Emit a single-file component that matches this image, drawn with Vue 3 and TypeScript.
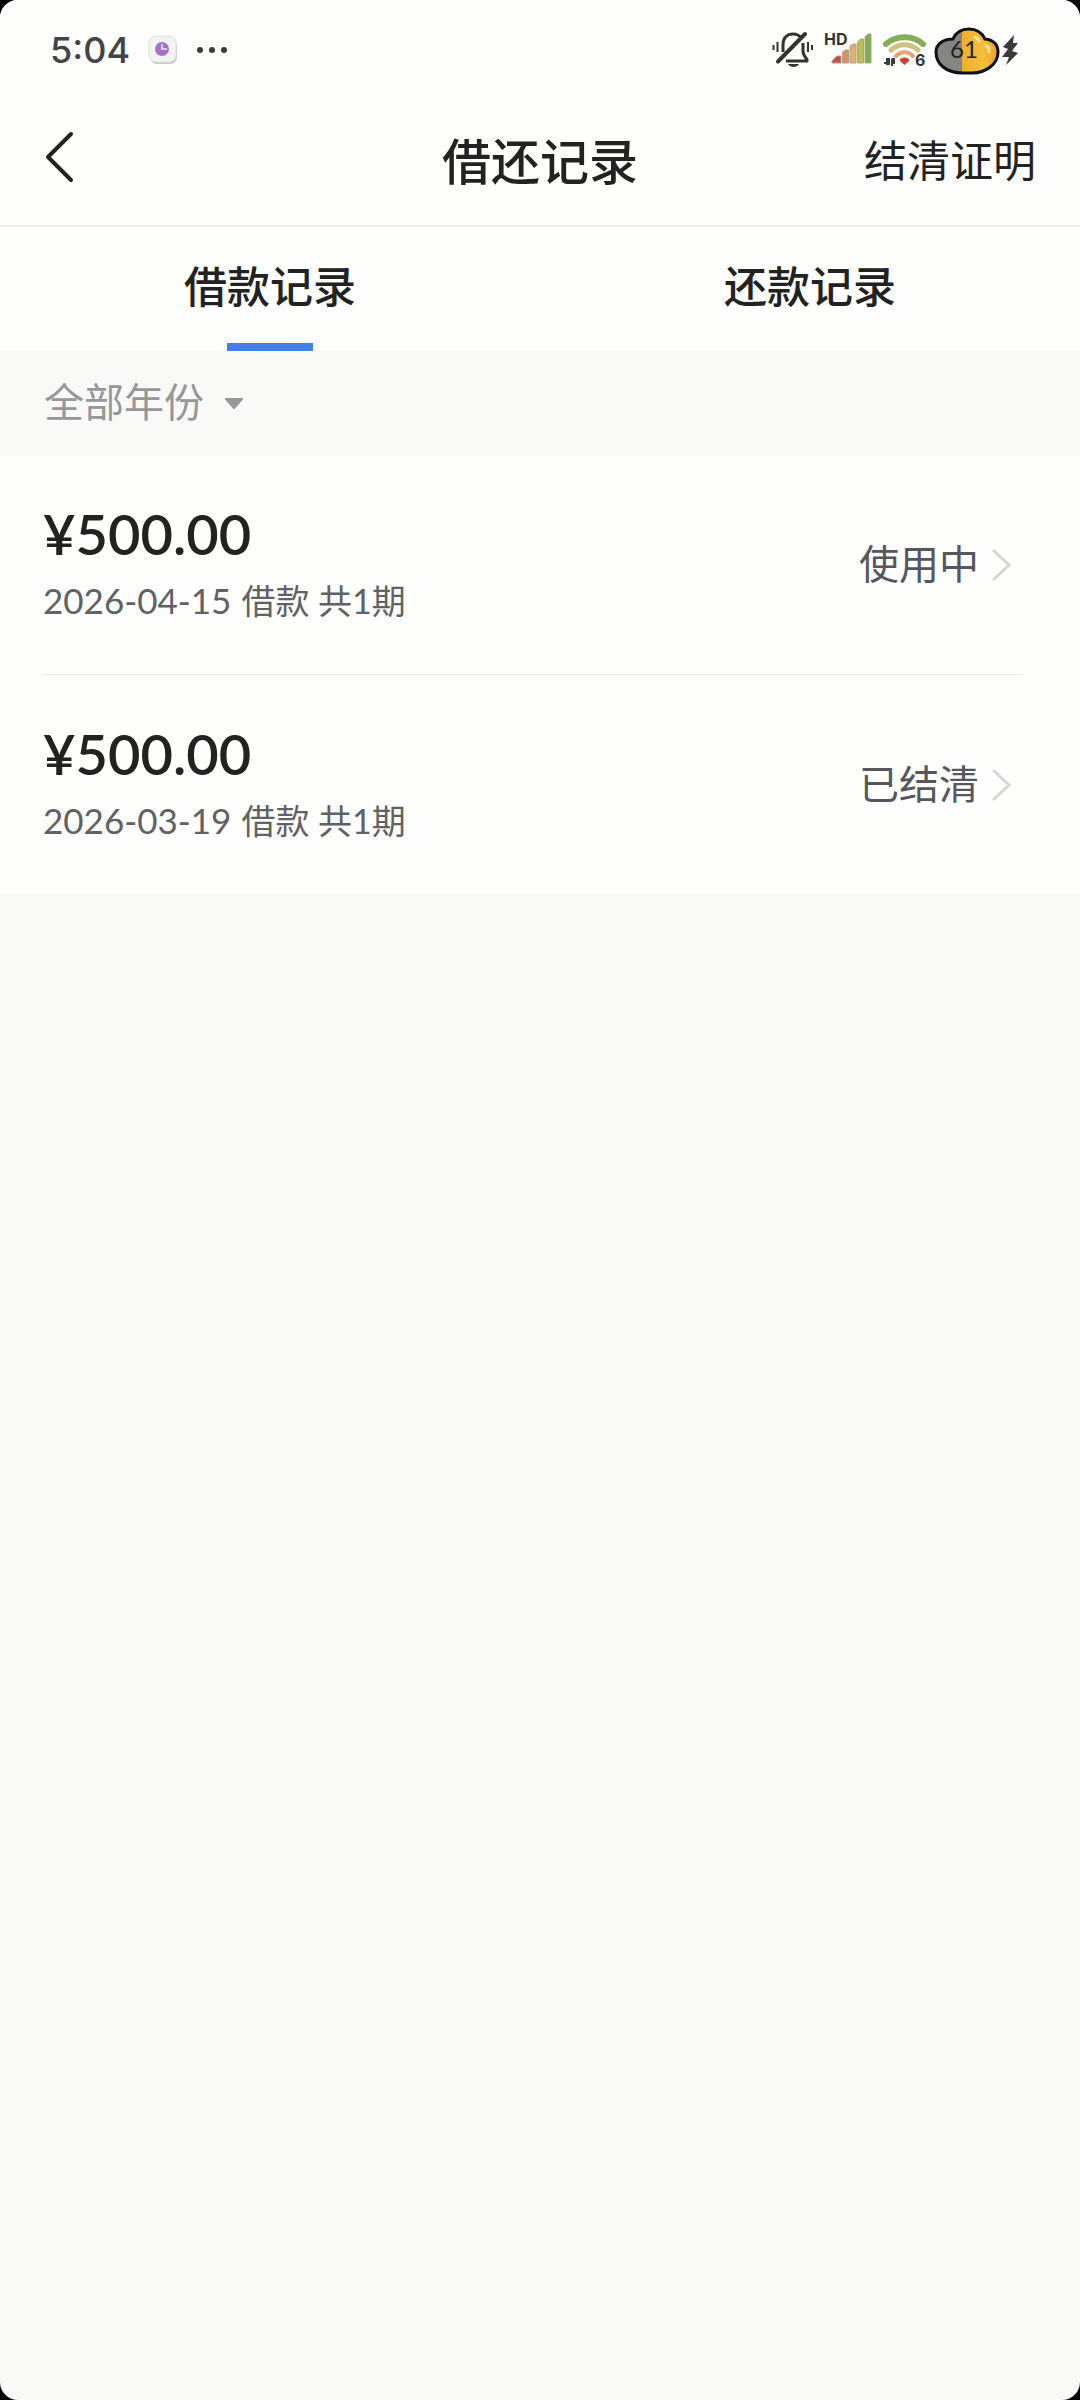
<script setup lang="ts">
import { ref } from 'vue'

interface LoanRecord {
  id: number
  amount: string
  date: string
  summary: string
  status: string
}

const tabs: string[] = ['借款记录', '还款记录']
const activeTab = ref<number>(0)
const year = ref<string>('全部年份')

const records: LoanRecord[] = [
  { id: 1, amount: '¥500.00', date: '2026-04-15', summary: '借款 共1期', status: '使用中' },
  { id: 2, amount: '¥500.00', date: '2026-03-19', summary: '借款 共1期', status: '已结清' },
]
</script>

<template>
  <div class="screen">
    <div class="status-bar">
      <div class="status-left">
        <span class="time">5:04</span>
        <svg width="30" height="30" viewBox="0 0 30 30" aria-hidden="true">
          <rect x="2" y="3" width="27" height="26" rx="7" fill="#c9ccc9" />
          <rect x="1" y="1" width="27" height="26" rx="7" fill="#f3f3f4" stroke="#dfe3df" />
          <circle cx="14" cy="14" r="7" fill="#a673c4" />
          <path d="M14 9v5h5" fill="none" stroke="#c9d3f7" stroke-width="2" />
        </svg>
        <svg width="32" height="8" viewBox="0 0 32 8" fill="#3a3a3a" aria-hidden="true">
          <circle cx="4" cy="4" r="3" />
          <circle cx="16" cy="4" r="3" />
          <circle cx="28" cy="4" r="3" />
        </svg>
      </div>
      <div class="status-right">
        <svg width="42" height="50" viewBox="0 0 42 50" fill="none" stroke="#333" stroke-width="3" aria-hidden="true">
          <path d="M11 27v-7c0-7 4-11 10-11 3 0 6 1 8 4M31 18v8c0 4 2 6 4 8.500v1.500H14" stroke-linejoin="round" />
          <path d="M33 9L6 36.500" stroke-width="4" stroke-linecap="round" />
          <path d="M16 39h11c-2 4-9 4-11 0z" fill="#333" stroke="none" />
          <path d="M1.500 20v5M5.500 17v10M36 17v10M40 20v5" stroke-width="2" />
        </svg>
        <svg width="48" height="50" viewBox="0 0 48 50" aria-hidden="true">
          <text x="0" y="20" class="badge-text">HD</text>
          <g stroke="#a9a292" stroke-width="1">
            <path d="M8 38v-2l5-5h4v7z" fill="#c4503f" />
            <path d="M18.500 38V27l3-2h3v13z" fill="#e38a66" />
            <path d="M26 38V21l3-2h3v19z" fill="#e6b06c" />
            <path d="M33.500 38V17l3-3h3v24z" fill="#bcbc60" />
            <path d="M41 38V12l3-3h3v29z" fill="#7fae48" />
          </g>
        </svg>
        <svg width="44" height="50" viewBox="0 0 44 50" fill="none" aria-hidden="true">
          <path d="M4 19c10-9 27-9 37 0" stroke="#86ad57" stroke-width="6" stroke-linecap="round" />
          <path d="M9 25c8-7 19-7 27 0" stroke="#cfc383" stroke-width="5" stroke-linecap="round" />
          <path d="M14 31c5-5 12-5 17 0" stroke="#e9a176" stroke-width="4" stroke-linecap="round" />
          <path d="M18 34q4.500-3 9 0v2l-4.500 4l-4.500-4z" fill="#c8442f" />
          <path d="M5 33v7M2 38h3M7 33v7M10 41v-7M10 34h3M12 34v5" stroke="#3a3a3a" stroke-width="2" />
          <text x="33" y="41" class="badge-text">6</text>
        </svg>
        <svg class="battery" width="66" height="50" viewBox="0 0 66 50" aria-hidden="true">
          <defs>
            <linearGradient id="charge" x1="0" y1="0" x2="66" y2="0" gradientUnits="userSpaceOnUse">
              <stop offset="0.42" stop-color="#858585" />
              <stop offset="0.42" stop-color="#eeb02c" />
              <stop offset="0.75" stop-color="#f7bd3c" />
              <stop offset="1" stop-color="#e8a022" />
            </linearGradient>
          </defs>
          <path
            d="M19 14C22 7 28 4 35 4C43 4 48 8 51 14C59 15 64 19 64 27C64 39 52 48 38 48H29C12 48 2 39 2 27C2 19 9 14 19 14Z"
            fill="url(#charge)" stroke="#111" stroke-width="3" />
          <path d="M41 12q3 1 4 4M52 21q4 1 3 6" fill="none" stroke="#fbe08d" stroke-width="3" stroke-linecap="round" />
          <text x="30" y="33" text-anchor="middle" class="battery-text">61</text>
        </svg>
        <svg width="16" height="50" viewBox="0 0 16 50" aria-hidden="true">
          <path d="M12 10L1 22l5 2l-6 8h7l-3 8l12-12l-6-2l6-8h-5z" fill="#3a3a3a" />
        </svg>
      </div>
    </div>

    <header class="nav">
      <button type="button" class="back" aria-label="返回">
        <svg width="30" height="64" viewBox="0 0 30 64" fill="none" aria-hidden="true">
          <path d="M27 5L4 28L27 51" stroke="#222" stroke-width="4" stroke-linecap="round" stroke-linejoin="round" />
        </svg>
      </button>
      <h1 class="title">借还记录</h1>
      <a href="#certificate" class="certificate">结清证明</a>
    </header>

    <nav class="tabs" role="tablist">
      <button v-for="(tab, index) in tabs" :key="tab" type="button" role="tab" class="tab"
        :class="{ active: index === activeTab }" :aria-selected="index === activeTab" @click="activeTab = index">
        {{ tab }}
      </button>
    </nav>

    <div class="filter">
      <select v-model="year" class="year" aria-label="年份">
        <option>全部年份</option>
      </select>
      <svg width="20" height="14" viewBox="0 0 20 14" aria-hidden="true">
        <path d="M2 3H18L10 12Z" fill="#969799" stroke="#969799" stroke-width="2" stroke-linejoin="round" />
      </svg>
    </div>

    <ul class="records">
      <li v-for="record in records" :key="record.id">
        <a :href="`#record-${record.id}`" class="record">
          <span class="detail">
            <span class="amount">{{ record.amount }}</span>
            <span class="summary">
              <time class="date">{{ record.date }}</time>
              <span>{{ record.summary }}</span>
            </span>
          </span>
          <span class="state">{{ record.status }}</span>
          <svg width="20" height="36" viewBox="0 0 20 36" fill="none" aria-hidden="true">
            <path d="M2 3L18 18L2 33" stroke="#d6d6d6" stroke-width="3" />
          </svg>
        </a>
      </li>
    </ul>
  </div>
</template>

<style>
body {
  background: #000;
}
</style>

<style scoped>
.screen {
  min-height: 100vh;
  overflow: hidden;
  border-radius: 18px;
  background: #f9f9f8;
  color: #222;
  font-family: Lato, "Noto Sans CJK SC", sans-serif;
}

button,
select {
  margin: 0;
  padding: 0;
  border: 0;
  background: none;
  color: inherit;
  font-family: inherit;
}

a {
  color: inherit;
  text-decoration: none;
}

svg {
  display: block;
  flex: none;
}

.status-bar {
  display: flex;
  align-items: center;
  justify-content: space-between;
  height: 100px;
  padding: 0 62px 0 50px;
  background: #fefefd;
}

.status-left {
  display: flex;
  align-items: center;
  gap: 18px;
}

.time {
  color: #444;
  font-family: Inter, sans-serif;
  font-size: 36px;
  font-weight: 500;
}

.status-right {
  display: flex;
  align-items: center;
  gap: 10px;
}

.battery {
  margin: 0 -8px 0 -2px;
}

.badge-text {
  fill: #333;
  font-family: Inter, sans-serif;
  font-size: 16px;
  font-weight: 700;
}

.battery-text {
  fill: #222;
  font-size: 24px;
}

.nav {
  display: grid;
  grid-template-columns: 1fr auto 1fr;
  align-items: center;
  height: 127px;
  padding: 0 44px 4px;
  box-sizing: border-box;
  border-bottom: 2px solid #f0f0f0;
  background: #fefefd;
}

.back {
  justify-self: start;
}

.title {
  margin: 0;
  font-size: 49px;
  font-weight: 500;
  line-height: 64px;
}

.certificate {
  justify-self: end;
  font-size: 43px;
  line-height: 64px;
}

.tabs {
  display: flex;
  background: #fefefd;
}

.tab {
  flex: 1;
  display: flex;
  flex-direction: column;
  align-items: center;
  justify-content: space-between;
  height: 124px;
  padding-top: 28px;
  font-size: 43px;
  font-weight: 500;
  line-height: 64px;
}

.tab.active::after {
  content: "";
  width: 86px;
  height: 8px;
  background: #4080e8;
}

.filter {
  display: flex;
  align-items: center;
  gap: 20px;
  height: 104px;
  padding: 0 44px;
  color: #969799;
}

.year {
  appearance: none;
  padding-bottom: 2px;
  font-size: 40px;
  line-height: 64px;
}

.records {
  margin: 0;
  padding: 0 57px 0 43px;
  background: #fefefd;
  list-style: none;
}

.records li + li {
  border-top: 1px solid #e8e8e8;
}

.record {
  display: flex;
  align-items: center;
  gap: 12px;
  height: 219px;
  padding-right: 12px;
}

.detail {
  display: flex;
  flex: 1;
  flex-direction: column;
}

.amount {
  font-size: 56px;
  font-weight: 600;
  line-height: 72px;
}

.summary {
  display: flex;
  align-items: baseline;
  gap: 10px;
  color: #5f6165;
  font-size: 34px;
  line-height: 60px;
}

.date {
  font-size: 35px;
}

.state {
  padding-bottom: 2px;
  color: #55575c;
  font-size: 40px;
  line-height: 60px;
}
</style>
